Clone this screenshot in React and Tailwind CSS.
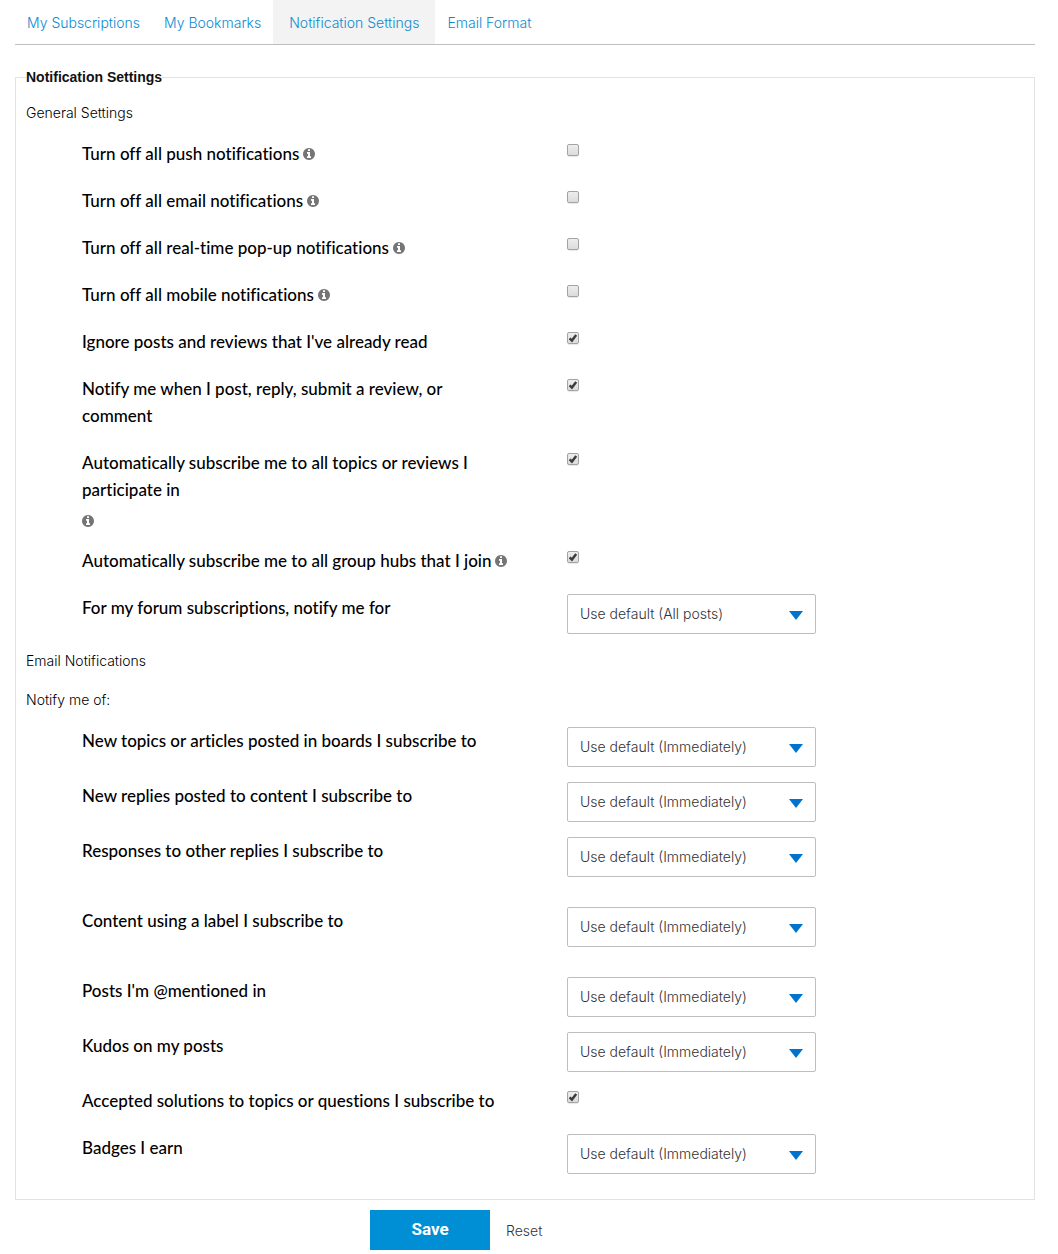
import React, { useState } from 'react';

const tabs = [
  { label: 'My Subscriptions' },
  { label: 'My Bookmarks' },
  { label: 'Notification Settings', active: true },
  { label: 'Email Format' },
];

const generalSettings = [
  { id: 'push', label: 'Turn off all push notifications', info: true },
  { id: 'email', label: 'Turn off all email notifications', info: true },
  { id: 'popup', label: 'Turn off all real-time pop-up notifications', info: true },
  { id: 'mobile', label: 'Turn off all mobile notifications', info: true },
  { id: 'ignoreRead', label: "Ignore posts and reviews that I've already read", checked: true },
  { id: 'notifyOwn', label: 'Notify me when I post, reply, submit a review, or comment', checked: true },
  { id: 'autoTopics', label: 'Automatically subscribe me to all topics or reviews I participate in', info: true, checked: true },
  { id: 'autoGroups', label: 'Automatically subscribe me to all group hubs that I join', info: true, checked: true },
  { id: 'forum', label: 'For my forum subscriptions, notify me for', options: ['Use default (All posts)', 'All posts', 'First post only'] },
];

const frequency = ['Use default (Immediately)', 'Immediately', 'Daily', 'Weekly', 'Never'];

const emailSettings = [
  { id: 'newTopics', label: 'New topics or articles posted in boards I subscribe to', options: frequency },
  { id: 'newReplies', label: 'New replies posted to content I subscribe to', options: frequency },
  { id: 'responses', label: 'Responses to other replies I subscribe to', options: frequency, spaced: true },
  { id: 'labels', label: 'Content using a label I subscribe to', options: frequency, spaced: true },
  { id: 'mentions', label: "Posts I'm @mentioned in", options: frequency },
  { id: 'kudos', label: 'Kudos on my posts', options: frequency },
  { id: 'solutions', label: 'Accepted solutions to topics or questions I subscribe to', checked: true },
  { id: 'badges', label: 'Badges I earn', options: frequency },
];

function getDefaults() {
  const values = {};
  [...generalSettings, ...emailSettings].forEach((s) => {
    values[s.id] = s.options ? s.options[0] : Boolean(s.checked);
  });
  return values;
}

function InfoIcon() {
  return (
    <svg viewBox="0 128 1536 1536" fill="currentColor" className="block size-3">
      <path d="M1024 1376v-160q0-14-9-23t-23-9h-96V672q0-14-9-23t-23-9H544q-14 0-23 9t-9 23v160q0 14 9 23t23 9h96v320h-96q-14 0-23 9t-9 23v160q0 14 9 23t23 9h448q14 0 23-9t9-23zM896 480V320q0-14-9-23t-23-9H672q-14 0-23 9t-9 23v160q0 14 9 23t23 9h192q14 0 23-9t9-23zm640 416q0 209-103 385.5T1153.5 1561 768 1664t-385.5-103T103 1281.5 0 896t103-385.5T382.5 231 768 128t385.5 103T1433 510.5 1536 896z" />
    </svg>
  );
}

function Checkbox({ id, checked, onChange }) {
  return (
    <span className="relative mt-1 block size-3">
      <input
        id={id}
        type="checkbox"
        checked={checked}
        onChange={(e) => onChange(e.target.checked)}
        className="peer block size-3 appearance-none rounded-xs border border-[#a3a3a3] bg-linear-to-b from-[#ededed] to-[#dcdcdc] shadow-[0_1px_1px_#e8e8e8]"
      />
      <svg viewBox="0 0 12 12" className="pointer-events-none absolute inset-0 hidden size-3 peer-checked:block">
        <path d="M2.6 6.4L4.9 8.6L9.2 3" fill="none" stroke="#3c3c3c" strokeWidth="2.4" />
      </svg>
    </span>
  );
}

function Select({ id, value, options, onChange }) {
  return (
    <span className="relative block w-[249px] max-w-full">
      <select
        id={id}
        value={value}
        onChange={(e) => onChange(e.target.value)}
        className="block h-10 w-full appearance-none rounded-xs border border-[#bebebe] bg-white pr-8 pb-0.5 pl-3 text-[14px] font-light text-[#333]"
      >
        {options.map((o) => (
          <option key={o}>{o}</option>
        ))}
      </select>
      <svg viewBox="0 0 14 9" className="pointer-events-none absolute top-[17px] right-[13px] h-[9px] w-[14px]">
        <path d="M0 0H14L7 9Z" fill="#0073cf" />
      </svg>
    </span>
  );
}

function SettingRow({ setting, value, onChange }) {
  const { id, label, info, options, spaced } = setting;
  return (
    <div className={`grid grid-cols-[485fr_457fr] pl-14 ${spaced ? 'mb-[30px]' : options ? 'mb-[15px]' : 'mb-5'}`}>
      <div className="flex max-w-[430px] flex-wrap items-center gap-x-1 gap-y-3 self-start">
        <label
          htmlFor={id}
          className="font-['Lato',sans-serif] text-[17px] leading-[27px] font-medium text-black [font-variant-ligatures:none]"
        >
          {label}
        </label>
        {info && (
          <button type="button" aria-label="More info" className="text-[#757575]">
            <InfoIcon />
          </button>
        )}
      </div>
      <div>
        {options ? (
          <Select id={id} value={value} options={options} onChange={onChange} />
        ) : (
          <Checkbox id={id} checked={value} onChange={onChange} />
        )}
      </div>
    </div>
  );
}

export default function App() {
  const [values, setValues] = useState(getDefaults);

  const update = (id) => (value) => setValues({ ...values, [id]: value });

  const handleReset = (e) => {
    e.preventDefault();
    setValues(getDefaults());
  };

  return (
    <div className="bg-white pr-[23px] pb-1 pl-[15px] font-['Inter',sans-serif] text-[14px]">
      <nav className="flex border-b border-[#bebebe] font-light">
        {tabs.map((tab) => (
          <a
            key={tab.label}
            href="#"
            className={`flex h-11 items-center text-[#0a8bd2] ${tab.active ? 'bg-[#f3f3f3] px-4' : 'px-3'}`}
          >
            {tab.label}
          </a>
        ))}
      </nav>

      <form onSubmit={(e) => e.preventDefault()} onReset={handleReset}>
        <fieldset className="mt-5 min-w-0 border border-[#e2e2e2] px-[10px] pb-[10px]">
          <legend className="font-['Liberation_Sans',sans-serif] leading-6 font-bold text-[#111]">
            Notification Settings
          </legend>

          <h3 className="mt-3 mb-[15px] leading-6 font-light text-black">General Settings</h3>
          {generalSettings.map((s) => (
            <SettingRow key={s.id} setting={s} value={values[s.id]} onChange={update(s.id)} />
          ))}

          <h3 className="mb-[15px] leading-6 font-light text-black">Email Notifications</h3>
          <p className="mb-[15px] leading-6 font-light text-black">Notify me of:</p>
          {emailSettings.map((s) => (
            <SettingRow key={s.id} setting={s} value={values[s.id]} onChange={update(s.id)} />
          ))}
        </fieldset>

        <div className="mt-[10px] flex items-center gap-4 pl-[355px]">
          <button type="submit" className="h-10 w-[120px] bg-[#008fd5] font-['Roboto',sans-serif] text-[17px] font-bold text-white">
            Save
          </button>
          <button type="reset" className="font-light text-[#333]">
            Reset
          </button>
        </div>
      </form>
    </div>
  );
}
